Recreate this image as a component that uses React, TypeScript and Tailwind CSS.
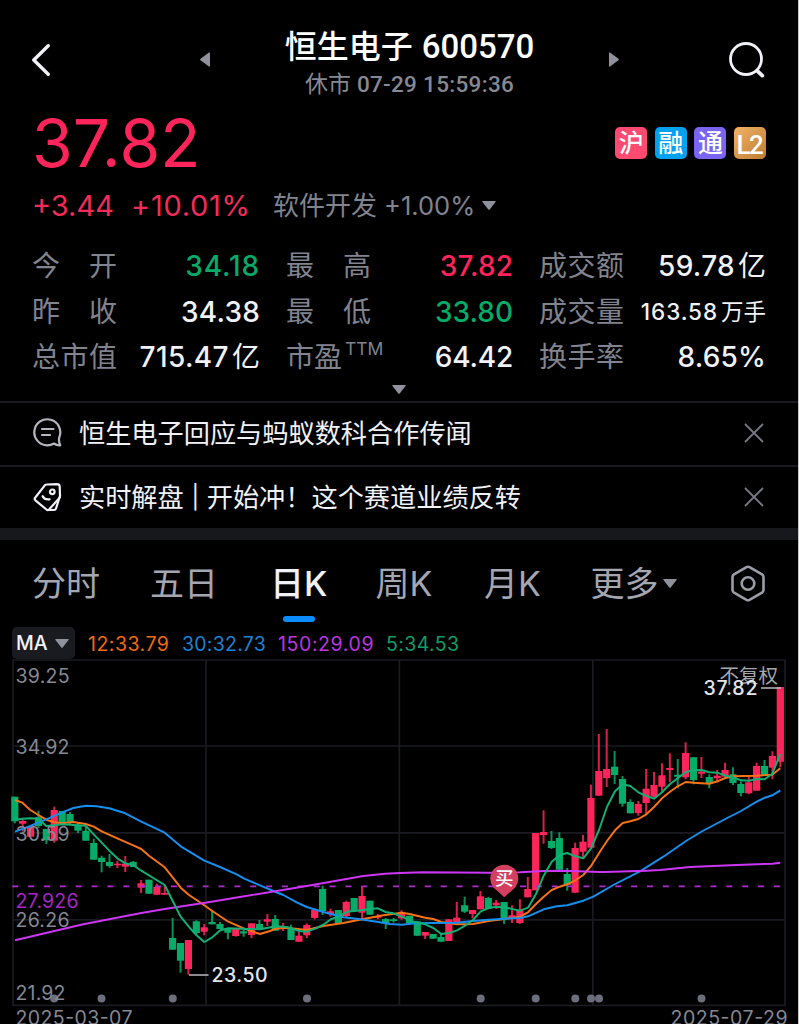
import React from 'react';

type Candle = [up: 0 | 1, high: number, top: number, bottom: number, low: number];

const RED = '#ff2459';
const GREEN = '#06ab68';

const candles: Candle[] = [
  [0, 796.7, 796.7, 821.3, 823.3], [1, 819.3, 821, 823.7, 831.5], [1, 826, 826, 836.7, 836.7],
  [0, 810.7, 817.3, 826, 828], [0, 829, 829, 840.3, 844], [1, 806.7, 810, 840.7, 842.7],
  [0, 811, 811, 823.3, 823.3], [0, 812, 814, 822.7, 825], [0, 823, 825.7, 830.7, 833],
  [0, 826, 830.7, 840.7, 840.7], [0, 838.7, 843, 859.7, 859.7], [0, 855.7, 857.7, 862, 872.3],
  [0, 854, 862, 866, 867.7], [1, 860.7, 863.7, 865.3, 868], [1, 856, 863.7, 866.7, 872],
  [0, 861, 862, 867, 867], [1, 880, 883.3, 887.7, 893], [0, 879.7, 879.7, 893.7, 893.7],
  [1, 883.7, 887, 894.7, 894.7], [1, 886, 893, 894.7, 894.7], [0, 918, 938, 949.7, 949.7],
  [0, 943, 943, 960.7, 972.7], [1, 940, 940, 969, 974.7], [0, 920.3, 921.3, 933, 934.3],
  [1, 924, 927.3, 931.7, 935.3], [0, 910.7, 922, 924.3, 924.3], [0, 922, 924, 929, 929],
  [0, 928.7, 928.7, 932.7, 939.3], [1, 929, 929, 936, 936.7], [0, 928.7, 931.3, 933.5, 936.7],
  [1, 923.3, 923.3, 935, 938], [0, 920, 924, 928.7, 928.7], [1, 914, 919.3, 921.7, 926],
  [0, 915, 919, 930.7, 930.7], [1, 923, 926.7, 928.7, 931], [0, 924.7, 928, 940, 940],
  [1, 931.7, 935.7, 941.7, 941.7], [1, 923.3, 925, 935.3, 938], [1, 908.7, 910, 918, 919.3],
  [0, 885.7, 889, 911.3, 915], [1, 908.7, 911.3, 914, 916.7], [0, 910, 910, 923.3, 923.3],
  [1, 900.7, 902, 916, 917.7], [0, 898, 898, 911.3, 911.3], [1, 886, 896, 912.7, 919],
  [0, 900.7, 900.7, 914.7, 914.7], [1, 914, 916.3, 917.7, 919.3], [0, 918, 919, 923, 929],
  [0, 918, 919.3, 921, 922.7], [1, 910.3, 913.3, 918.3, 919.7], [0, 915.7, 915.7, 923, 923],
  [0, 921.3, 921.3, 935.7, 935.7], [1, 932, 932, 935.7, 939], [0, 934, 934, 938.7, 938.7],
  [0, 934, 937, 941.7, 941.7], [1, 919.3, 919.3, 941, 941], [1, 902, 917.7, 923.3, 923.3],
  [0, 896.7, 905.3, 911.7, 913], [1, 910, 910, 914, 918.3], [1, 891, 896.3, 909.3, 909.3],
  [0, 897, 898, 908.7, 908.7], [1, 900, 902.7, 905.3, 909], [0, 902, 902, 918.7, 924],
  [1, 905.3, 915.3, 918, 923], [1, 899.3, 910.3, 923, 924], [1, 877, 889, 897.3, 897.3],
  [1, 833, 833, 890.3, 890.3], [1, 810.3, 832, 835, 843.7], [0, 831, 841, 848, 849],
  [0, 832.3, 838, 869.7, 869.7], [0, 868, 874, 885, 890.7], [1, 842.7, 848, 892.7, 892.7],
  [1, 835, 841.7, 851.7, 858.7], [1, 784.7, 798, 847.7, 847.7], [1, 734, 771, 795.7, 795.7],
  [1, 729, 769, 778, 787], [0, 751, 766.7, 775, 784], [0, 776, 779, 803.7, 806.7],
  [0, 799.3, 802, 813.3, 813.3], [1, 801, 804, 813, 815.7], [1, 769, 788.7, 803, 814],
  [1, 772, 785, 796.7, 798], [1, 763.3, 775.3, 786.7, 791.7], [1, 753.3, 768, 770, 782],
  [0, 759, 774.7, 776.7, 788.3], [1, 742.3, 753, 777.3, 779.3], [0, 757.3, 757.3, 780, 784.3],
  [1, 757, 771.7, 773.7, 778], [0, 774.3, 777, 783.7, 788.3], [1, 770, 775.7, 778.3, 782.7],
  [1, 762.7, 770, 776.7, 776.7], [0, 767.3, 774.3, 783, 785], [0, 781.3, 784, 793, 796.3],
  [1, 775.7, 782.3, 793.3, 794.3], [1, 762.7, 766, 790.7, 790.7], [0, 760, 766, 775.7, 775.7],
  [1, 751.3, 756, 767.7, 779.3], [1, 687, 687, 761.7, 767.3],
];

const averages = [
  {
    color: '#f97316',
    points:
      '15,800 22.4,802.7 30.3,810 38.3,815 46.3,819.7 54.3,822.3 62.3,823.3 73.3,822 85.7,824 93.7,826.7 101.7,831.3 117.3,838.3 133.3,845.3 141.3,849 149,855.7 164.7,867.3 172.7,877.3 180.7,887.7 188.7,894.7 204.3,905.3 212.3,911 228.3,921.7 244.3,928.7 260,934 270,931 275.7,928.7 286.7,927.7 306.7,930 323.3,926 343.3,923 363.3,919 383.3,915.3 401.7,912.7 409.7,914 425.3,917.7 433.3,919 441.3,922 456.7,924.3 473,924 488.7,921 504.3,919 520,916.7 528,912.3 536,904 543.7,896.7 551.7,890 559.7,886.7 567.3,884.3 575.3,880.3 583.3,875 591,866 601,850 607,841 615,830.3 622.7,823 630.3,821.3 638.3,819 646.3,814.3 654,807 662,798.3 670,791.7 677.7,786.3 685.7,782 693.7,782.7 709.3,783.7 717.3,781.3 725.3,778 733.3,776.3 756.7,775.7 772.3,774.7 780.3,768.3',
  },
  {
    color: '#158ff0',
    points:
      '15,831.7 30.3,826 46.3,819.3 62.3,812.3 73.3,808 85.7,805.7 96.7,806.3 109.3,808.3 125.3,813.3 141.3,821.7 164.7,832.7 180.7,846.3 204.3,860.7 220,867 236.7,874.3 244.3,878.7 260,885.3 275.7,892 283.3,895 296.7,902.3 306.7,907 323.3,912 343.3,917.3 356.7,918.7 376.7,921.7 390,924 401.7,924.7 415,923.3 433,923 457,922.7 473,921 488.7,919.7 504.3,918.7 520,918 528,916.3 543.7,909.3 556.7,906.3 567.3,905.3 583.3,900.7 593.3,896.7 613.3,885 640,871.3 663.3,856.7 686,841 701.7,831.5 725.3,819 741,811 756.7,801.7 764.7,797.7 772.3,795.3 780.3,790.3',
  },
  {
    color: '#cc36f4',
    points:
      '15,940.3 83.3,924.3 140,913.3 164.7,909 210,902 244.3,896.3 306.7,886 363.3,876 385,873.7 400,873 423,872.3 490,872.7 520,872.3 543.7,871 563.3,870.7 600,872 605,872 646.7,870.7 660,870 690,867 736.7,865 772.3,863.7 780.3,862.7',
  },
  {
    color: '#12b076',
    points:
      '15,820 22.4,818.7 30.3,818.3 38.3,818.7 46.3,826 62.3,824.3 85.7,825.7 93.7,834.3 101.7,842.7 109.3,850.7 117.3,858.3 125.3,863.3 133.3,865.3 141.3,870.7 164.7,885 172.7,901 180.7,916.7 188.7,926.7 196.3,935 204.3,942 212.3,937.3 220.3,930.3 228.3,928.3 260,929.3 275.7,926.3 286.7,927 299.3,931 306.7,931.7 315.3,928.7 323.3,924.7 331.3,919 339,916.7 347,911.7 356.7,910.7 370,909 377.7,908.3 385.7,912 393.3,913.3 401.7,916.7 413.3,921.7 425.3,924.3 433.3,928 441.3,934 449,933 457,930.3 465,925.7 473,920 480.7,911.3 488.7,908 496.3,906.7 504.3,907.3 520,910.7 528,907.7 536,894 543.7,875.7 551.7,861.7 559.7,855 567.3,853 575.3,856.3 583.3,858.3 591,848.3 599,830 607,806.7 615,791.3 622.7,784.3 630.3,786 638.3,792.3 646.3,796 654,798.7 662,792.3 670,784 677.7,778.3 685.7,772 693.7,770.3 701.7,770 709.3,772.3 717.3,772.7 725.3,775.7 733.3,777.3 741,780.3 749,780.7 756.7,779 764.7,779.3 772.3,773.7 780.3,754',
  },
];

const eventDots = [54.2, 101.5, 172.8, 307, 480.7, 535.7, 575.3, 591, 599, 701.5];

const axis = [
  { y: 682.5, text: '39.25', w: 54 },
  { y: 753.5, text: '34.92', w: 54 },
  { y: 840.5, text: '30.59', w: 54 },
  { y: 927, text: '26.26', w: 54 },
  { y: 1000, text: '21.92', w: 50 },
];

function KLineChart() {
  return (
    <svg
      className="block h-[365px] w-[798px] shrink-0 font-['Inter','Noto_Sans_CJK_SC',sans-serif]"
      viewBox="0 659 798 365"
    >
      <g fill="none" stroke="#1a1b20" strokeWidth="1.7">
        <path d="M13 660H785V1005.3H13Z" />
        <path d="M206 660V1005M399.3 660V1005M592.8 660V1005M13 746H785M13 832.8H785M13 919.8H785" />
      </g>
      {candles.map(([up, high, top, bottom, low], i) => {
        const x = 14.8 + i * 7.892;
        const color = up ? RED : GREEN;
        return (
          <g key={i}>
            <rect x={x - 1} y={high} width="2" height={low - high} fill={color} opacity="0.85" />
            <rect x={x - 3.6} y={top} width="7.2" height={bottom - top} fill={color} />
          </g>
        );
      })}
      <path d="M12.2 886.3H780.3" stroke="#b02bd2" strokeWidth="1.7" strokeDasharray="6 9.87" />
      {averages.map((line) => (
        <polyline
          key={line.color}
          points={line.points}
          fill="none"
          stroke={line.color}
          strokeWidth="1.95"
          strokeLinejoin="round"
        />
      ))}
      <g fill="#6b6e7c">
        {eventDots.map((x) => (
          <circle key={x} cx={x} cy="998.6" r="4" />
        ))}
      </g>
      <g fontSize="19.5" fill="#868893">
        {axis.map((a) => (
          <text key={a.text} x="15.5" y={a.y} textLength={a.w}>{a.text}</text>
        ))}
        <text x="15.5" y="1025" textLength="117">2025-03-07</text>
        <text x="670.5" y="1025" textLength="117">2025-07-29</text>
        <text x="15.5" y="907.5" textLength="63" fill="#a526c4">27.926</text>
      </g>
      <path d="M504.3 897.3L493.2 887.2A14 14 0 1 1 515.4 887.2Z" fill="#d43f5f" />
      <text x="504.3" y="885" fontSize="18.5" fontWeight="500" fill="#fff" textAnchor="middle">买</text>
      <path d="M189 975H208.5M761 688H781" stroke="#b9bac0" strokeWidth="1.5" />
      <text x="211.5" y="982.3" fontSize="19.5" fontWeight="500" fill="#e4e5ea" textLength="56">23.50</text>
      <text x="719.5" y="682.5" fontSize="19.5" fill="#a3a5b0">不复权</text>
      <text x="703.5" y="695.3" fontSize="19.5" fontWeight="500" fill="#e4e5ea" textLength="54">37.82</text>
    </svg>
  );
}

function Down({ className }: { className: string }) {
  return (
    <svg className={className} viewBox="0 0 14 9" fill="#8f919d">
      <path d="M.8 0H13.2Q14.2 0 13.5 1L7.7 8.6Q7 9.3 6.3 8.6L.5 1Q-.2 0 .8 0Z" />
    </svg>
  );
}

type StatProps = {
  label: string[];
  value: string;
  unit?: string;
  cls: string;
  sup?: string;
};

function Stat({ label, value, unit, cls, sup }: StatProps) {
  return (
    <div className="flex h-[45.7px] items-center justify-between">
      <div className={`flex text-[28px] text-[#81838e] ${sup ? '' : 'w-[85px] justify-between'}`}>
        {label.map((c) => (
          <span key={c}>{c}</span>
        ))}
        {sup && <span className="ml-[3px] pt-px text-[17.5px] leading-6">{sup}</span>}
      </div>
      <div className={`flex items-center font-medium whitespace-nowrap ${cls}`}>
        <span>{value}</span>
        {unit && <span className="ml-[3px] font-normal tracking-normal">{unit}</span>}
      </div>
    </div>
  );
}

function Close() {
  return (
    <svg className="h-5 w-5" viewBox="0 0 20 20" fill="none" stroke="#757783" strokeWidth="1.8">
      <path d="M1 1L19 19M19 1L1 19" />
    </svg>
  );
}

const badges = [
  { text: '沪', bg: 'bg-[#fd4a70]' },
  { text: '融', bg: 'bg-[#03a2f0]' },
  { text: '通', bg: 'bg-[#7a65f3]' },
];

const legend = [
  { text: '12:33.79', cls: 'w-[94px] tracking-[0.5px] text-[#f26a12]' },
  { text: '30:32.73', cls: 'w-[96px] tracking-[0.25px] text-[#1b84d4]' },
  { text: '150:29.09', cls: 'w-[108px] tracking-[0.6px] text-[#bd35e0]' },
  { text: '5:34.53', cls: 'w-[80px] tracking-[0.4px] text-[#129c67]' },
];

export default function App() {
  return (
    <div className="flex h-[1024px] w-[799px] flex-col overflow-hidden border-r border-[#c6c6c4] bg-black font-['Inter','Noto_Sans_CJK_SC',sans-serif] text-[#f1f1f8]">
      <header className="flex h-[106px] shrink-0 items-center justify-between pt-[13px] pr-[33px] pl-[32px]">
        <div className="flex w-[178px] items-center justify-between">
          <svg className="h-8 w-[19px]" viewBox="0 0 19 32" fill="none" stroke="#f1f1f8" strokeWidth="3.4" strokeLinecap="round" strokeLinejoin="round">
            <path d="M16.2 1.8L1.8 16L16.2 30.2" />
          </svg>
          <svg className="h-[15px] w-[10px]" viewBox="0 0 10 15" fill="#8f919d">
            <path d="M10 1V14Q10 15 9 14.4L.5 8.3Q-.3 7.5 .5 6.7L9 .6Q10 0 10 1Z" />
          </svg>
        </div>
        <div className="flex flex-col items-center pt-[10px] font-['Roboto','Noto_Sans_CJK_SC',sans-serif]">
          <h1 className="text-[32px] leading-[38px] font-medium whitespace-pre text-white">
            恒生电子<span className="ml-[9px] text-[33px]">600570</span>
          </h1>
          <p className="mt-[2px] flex text-[22.5px] leading-[33px] whitespace-pre text-[#868894]">
            <span className="text-[23px]">休市</span>
            <span className="ml-[6px] font-medium tracking-[0.3px]">07-29 15:59:36</span>
          </p>
        </div>
        <div className="flex w-[156px] items-center justify-between">
          <svg className="h-[15px] w-[10px]" viewBox="0 0 10 15" fill="#8f919d">
            <path d="M0 1V14Q0 15 1 14.4L9.5 8.3Q10.3 7.5 9.5 6.7L1 .6Q0 0 0 1Z" />
          </svg>
          <svg className="h-[36px] w-[37px]" viewBox="0 0 37 36" fill="none" stroke="#f1f1f8" strokeWidth="2.8" strokeLinecap="round">
            <circle cx="18" cy="17" r="15.5" />
            <path d="M29.3 28.8L34.3 33.6" strokeWidth="3.8" />
          </svg>
        </div>
      </header>

      <section className="flex h-[76px] shrink-0 items-center justify-between px-8 pb-[2px]">
        <div className="text-[66px] leading-[76px] text-[#ff2459]">37.82</div>
        <div className="flex gap-[7.6px]">
          {badges.map((b) => (
            <span key={b.text} className={`flex h-8 w-8 items-center justify-center rounded-[5px] text-[25px] leading-8 font-medium text-white ${b.bg}`}>{b.text}</span>
          ))}
          <span className="flex h-8 w-8 items-center justify-center rounded-[5px] bg-linear-to-br from-[#f3b467] to-[#bc7c30] pt-[3px] pr-px font-['Roboto'] text-[26px] leading-8 font-medium tracking-[-1.5px] text-white">L2</span>
        </div>
      </section>

      <section className="flex h-[48px] shrink-0 items-center px-8 pb-px text-[29px] text-[#f22c58]">
        <span className="w-[99px]">+3.44</span>
        <span className="w-[142px] tracking-[0.7px]">+10.01%</span>
        <span className="text-[26px] whitespace-pre text-[#81838e]">软件开发<span className="ml-[7px] text-[25.5px]">+1.00%</span></span>
        <Down className="ml-[7px] h-[9px] w-[14px]" />
      </section>

      <section className="grid shrink-0 grid-cols-[228px_227px_227px] gap-x-[26px] px-8 pt-[13px]">
        <Stat label={['今', '开']} value="34.18" cls="text-[28px] tracking-[0.9px] text-[#06ab68]" />
        <Stat label={['最', '高']} value="37.82" cls="text-[28px] tracking-[0.1px] text-[#ff2459]" />
        <Stat label={['成', '交', '额']} value="59.78" unit="亿" cls="text-[28px] tracking-[0.3px]" />
        <Stat label={['昨', '收']} value="34.38" cls="text-[28px] tracking-[0.2px]" />
        <Stat label={['最', '低']} value="33.80" cls="text-[28px] tracking-[0px] text-[#06ab68]" />
        <Stat label={['成', '交', '量']} value="163.58" unit="万手" cls="text-[22.5px] tracking-[0.9px]" />
        <Stat label={['总', '市', '值']} value="715.47" unit="亿" cls="text-[28px] tracking-[0.4px]" />
        <Stat label={['市', '盈']} value="64.42" sup="TTM" cls="text-[28px] tracking-[-0.2px]" />
        <Stat label={['换', '手', '率']} value="8.65%" cls="text-[28px] tracking-[0.2px]" />
      </section>
      <div className="flex h-[20.9px] shrink-0 justify-center pt-[5px]">
        <Down className="h-[9px] w-[14px]" />
      </div>

      <section className="shrink-0 text-[26.2px]">
        <div className="flex h-[64px] items-center border-t-2 border-[#1a1b20] pr-[34px] pb-[2px] pl-[33px]">
          <svg className="h-[29px] w-[29px]" viewBox="0 0 29 29" fill="none" stroke="#b5b6c0" strokeWidth="2.2" strokeLinecap="round" strokeLinejoin="round">
            <path d="M14.3 27.3A13 13 0 1 1 26.2 19.5Q25.4 23.5 27.2 27.3Q23.8 27.6 21 25.5Q18 27.3 14.3 27.3Z" />
            <path d="M9 11H20.5M9 17H17" />
          </svg>
          <span className="ml-[17px] flex-1 pt-[2px]">恒生电子回应与蚂蚁数科合作传闻</span>
          <Close />
        </div>
        <div className="flex h-[63px] items-center border-t-2 border-[#1a1b20] pr-[34px] pb-px pl-[33px]">
          <svg className="h-[30px] w-[29px]" viewBox="0 0 29 30" fill="none" stroke="#f1f1f8" strokeWidth="2.2" strokeLinecap="round" strokeLinejoin="round">
            <path d="M13.5 2.5L24 2.2Q26.5 2.2 26.7 4.5L27 14Q27 15.5 26 16.5L16 27.5Q14.8 28.7 13.5 27.5L2.4 18.3Q1 17 2.3 15.5L11.8 3.4Q12.5 2.5 13.5 2.5Z" />
            <circle cx="19.3" cy="9.8" r="2.3" />
            <path d="M9.7 14.2Q11.5 18 16.6 17.3" />
            <path d="M27 14L23 26.5Q22.6 28 21 28H14.8" />
          </svg>
          <span className="ml-[17px] flex flex-1 items-center pt-px">
            实时解盘
            <span className="w-[23px] text-center text-[23px] leading-[30px] font-normal">|</span>
            开始冲！这个赛道业绩反转
          </span>
          <Close />
        </div>
      </section>
      <div className="h-3 shrink-0 bg-[#17181c]" />

      <nav className="flex h-[87px] shrink-0 items-center pt-px pr-[33px] pl-[32px] text-[34px] text-[#a4a6b1]">
        <span className="w-[118px]">分时</span>
        <span className="w-[120px]">五日</span>
        <span className="relative w-[105.5px] font-medium text-[#f1f1f8]">
          日K
          <i className="absolute -bottom-[13px] left-[13px] h-[6px] w-8 rounded-full bg-[#0a8bff]" />
        </span>
        <span className="w-[108.5px]">周K</span>
        <span className="w-[106.5px]">月K</span>
        <span className="flex items-center gap-1">
          更多
          <Down className="h-[9px] w-[14px]" />
        </span>
        <svg className="ml-auto h-[37px] w-[34px]" viewBox="0 0 34 37" fill="none" stroke="#9b9da8" strokeWidth="2.6" strokeLinejoin="round">
          <path d="M15.5 2.1Q17 1.3 18.5 2.1L31 9.3Q32.5 10.2 32.5 12V25Q32.5 26.8 31 27.7L18.5 34.9Q17 35.7 15.5 34.9L3 27.7Q1.5 26.8 1.5 25V12Q1.5 10.2 3 9.3Z" />
          <circle cx="17" cy="18.5" r="6.3" />
        </svg>
      </nav>

      <div className="flex h-8 shrink-0 items-center pl-3 text-[19.5px]">
        <div className="mr-[13px] flex h-8 w-[63px] items-center gap-[7px] rounded-[5px] bg-[#1a1b20] pt-[2px] pl-1 font-medium">
          MA
          <Down className="h-[9px] w-[14px]" />
        </div>
        {legend.map((l) => (
          <span key={l.text} className={`pt-[3px] ${l.cls}`}>{l.text}</span>
        ))}
      </div>
      <KLineChart />
    </div>
  );
}
